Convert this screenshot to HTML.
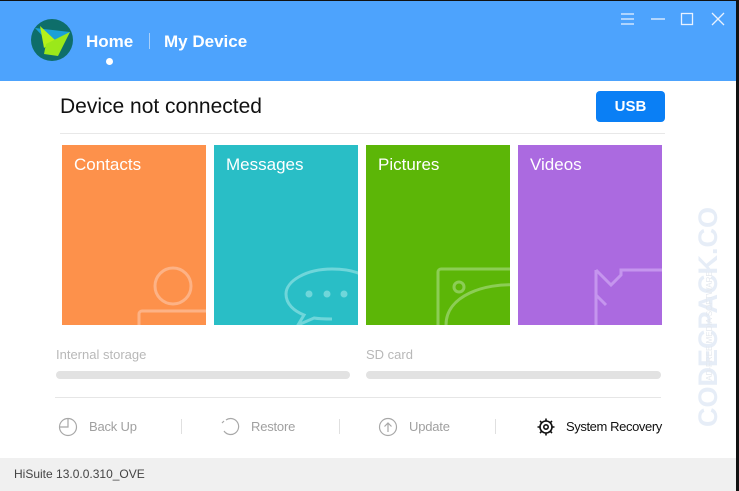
<!DOCTYPE html>
<html><head><meta charset="utf-8"><style>
*{margin:0;padding:0;box-sizing:border-box}
body{width:739px;height:491px;overflow:hidden;background:#fff;font-family:"Liberation Sans",sans-serif;position:relative}
.abs{position:absolute}
.hdr{left:0;top:0;width:739px;height:81px;background:#4da3fd;border-top:1px solid #111}
.card{top:145px;width:144px;height:180px;overflow:hidden}
.card span{position:absolute;left:12px;top:10px;color:#fff;font-size:17px}
.lbl{color:#b8b8b8;font-size:13px}
.bar{height:8px;border-radius:4px;background:#e2e2e2}
.act{top:419px;font-size:13px;color:#a0a0a0;letter-spacing:-0.2px}
.sep{top:419px;width:1px;height:15px;background:#e0e0e0}
</style></head><body>
<div class="abs hdr"></div>
<svg class="abs" style="left:30px;top:18px" width="44" height="44" viewBox="0 0 44 44">
<circle cx="22" cy="22" r="21" fill="#0e6e6a"/>
<polygon points="5,10 40,14 26,32" fill="#1aa0d8"/>
<polygon points="10,8 25,22 14,30" fill="#b5f01a"/>
<polygon points="16,26 40,14 28,38 14,36" fill="#9be81a"/>
</svg>
<div class="abs" style="left:86px;top:32px;color:#fff;font-size:17px;font-weight:bold">Home</div>
<div class="abs" style="left:149px;top:33px;width:1px;height:16px;background:#a8d0fb"></div>
<div class="abs" style="left:164px;top:32px;color:#fff;font-size:17px;font-weight:bold">My Device</div>
<div class="abs" style="left:106px;top:58px;width:7px;height:7px;border-radius:50%;background:#fff"></div>
<svg class="abs" style="left:618px;top:10px" width="110" height="20" stroke="#e8f2ff" stroke-width="1.3" fill="none">
<path d="M3,4H16M3,9H16M3,14H16"/><path d="M33,9H47"/><rect x="63.5" y="3.5" width="11" height="11"/><path d="M94,3L106,15M106,3L94,15"/>
</svg>
<div class="abs" style="left:736px;top:0;width:3px;height:491px;background:#111"></div>
<div class="abs" style="left:60px;top:95px;font-size:21px;color:#111">Device not connected</div>
<div class="abs" style="left:596px;top:91px;width:69px;height:31px;background:#0a7ff5;border-radius:4px;color:#fff;font-weight:bold;font-size:15px;text-align:center;line-height:31px">USB</div>
<div class="abs" style="left:60px;top:133px;width:605px;height:1px;background:#e8e8e8"></div>
<div class="abs card" style="left:62px;background:#fd914b"><span>Contacts</span>
<svg class="abs" style="left:0;top:0" width="144" height="180" fill="none" stroke="#fdb285" stroke-width="3"><circle cx="111" cy="141" r="18"/><rect x="77" y="166" width="80" height="40" rx="3"/></svg></div>
<div class="abs card" style="left:214px;background:#29bec6"><span>Messages</span>
<svg class="abs" style="left:0;top:0" width="144" height="180" fill="none" stroke="#6fd6da" stroke-width="3"><path d="M150,131c-8,-5-20,-7-32,-7c-26,0-46,12-46,25c0,10 8,17 18,21l-6,10l16-7c6,1 12,1 18,1"/><circle cx="95" cy="149" r="3.5" fill="#6fd6da" stroke="none"/><circle cx="113" cy="149" r="3.5" fill="#6fd6da" stroke="none"/><circle cx="130" cy="149" r="3.5" fill="#6fd6da" stroke="none"/></svg></div>
<div class="abs card" style="left:366px;background:#5cb607"><span>Pictures</span>
<svg class="abs" style="left:0;top:0" width="144" height="180" fill="none" stroke="#8ccd55" stroke-width="3"><rect x="72" y="124" width="100" height="80" rx="3"/><circle cx="93" cy="142" r="5"/><path d="M80,180c0-30 40-42 70-40"/></svg></div>
<div class="abs card" style="left:518px;background:#ab6ae0"><span>Videos</span>
<svg class="abs" style="left:0;top:0" width="144" height="180" fill="none" stroke="#c595ee" stroke-width="3"><path d="M78,180V150l10,10M78,125l15,15l10-10v-5h50"/><path d="M78,125V150"/></svg></div>
<div class="abs lbl" style="left:56px;top:347px">Internal storage</div>
<div class="abs lbl" style="left:366px;top:347px">SD card</div>
<div class="abs bar" style="left:56px;top:371px;width:294px"></div>
<div class="abs bar" style="left:366px;top:371px;width:295px"></div>
<div class="abs" style="left:55px;top:397px;width:606px;height:1px;background:#e6e6e6"></div>
<svg class="abs" style="left:58px;top:416px" width="22" height="22" fill="none" stroke="#a8a8a8" stroke-width="1.2"><circle cx="10" cy="11" r="8.5"/><path d="M10,2.5V11H2"/></svg>
<div class="abs act" style="left:89px">Back Up</div>
<div class="abs sep" style="left:181px"></div>
<svg class="abs" style="left:220px;top:416px" width="22" height="22" fill="none" stroke="#a8a8a8" stroke-width="1.2"><path d="M6,4A8,8 0 1 1 4,15"/><path d="M2,7L4,5"/></svg>
<div class="abs act" style="left:251px">Restore</div>
<div class="abs sep" style="left:339px"></div>
<svg class="abs" style="left:378px;top:416px" width="22" height="22" fill="none" stroke="#a8a8a8" stroke-width="1.2"><circle cx="10" cy="11" r="8.5"/><path d="M10,16V7M6.5,10.5L10,7L13.5,10.5"/></svg>
<div class="abs act" style="left:409px">Update</div>
<div class="abs sep" style="left:495px"></div>
<svg class="abs" style="left:536px;top:417px" width="20" height="20" fill="none" stroke="#111" stroke-width="1.6"><circle cx="10" cy="10" r="6"/><circle cx="10" cy="10" r="2.2"/><path d="M10,1.5V4M10,16V18.5M1.5,10H4M16,10H18.5M4,4L5.8,5.8M14.2,14.2L16,16M4,16L5.8,14.2M14.2,5.8L16,4"/></svg>
<div class="abs act" style="left:566px;color:#111;letter-spacing:-0.4px">System Recovery</div>
<div class="abs" style="left:0;top:458px;width:736px;height:33px;background:#f0f0f0"></div>
<div class="abs" style="left:14px;top:467px;font-size:12px;color:#444">HiSuite 13.0.0.310_OVE</div>
<div class="abs" style="left:578px;top:302px;width:260px;height:30px;transform:rotate(-90deg);transform-origin:center;color:#e6edf7;font-size:27px;font-weight:bold;text-align:center;line-height:30px">CODECPACK.CO</div>
<div class="abs" style="left:636px;top:320px;width:150px;height:12px;transform:rotate(-90deg);transform-origin:center;color:#e4e8ee;font-size:8px;text-align:center">AD-FREE MEDIA SOFTWARE</div>
</body></html>
